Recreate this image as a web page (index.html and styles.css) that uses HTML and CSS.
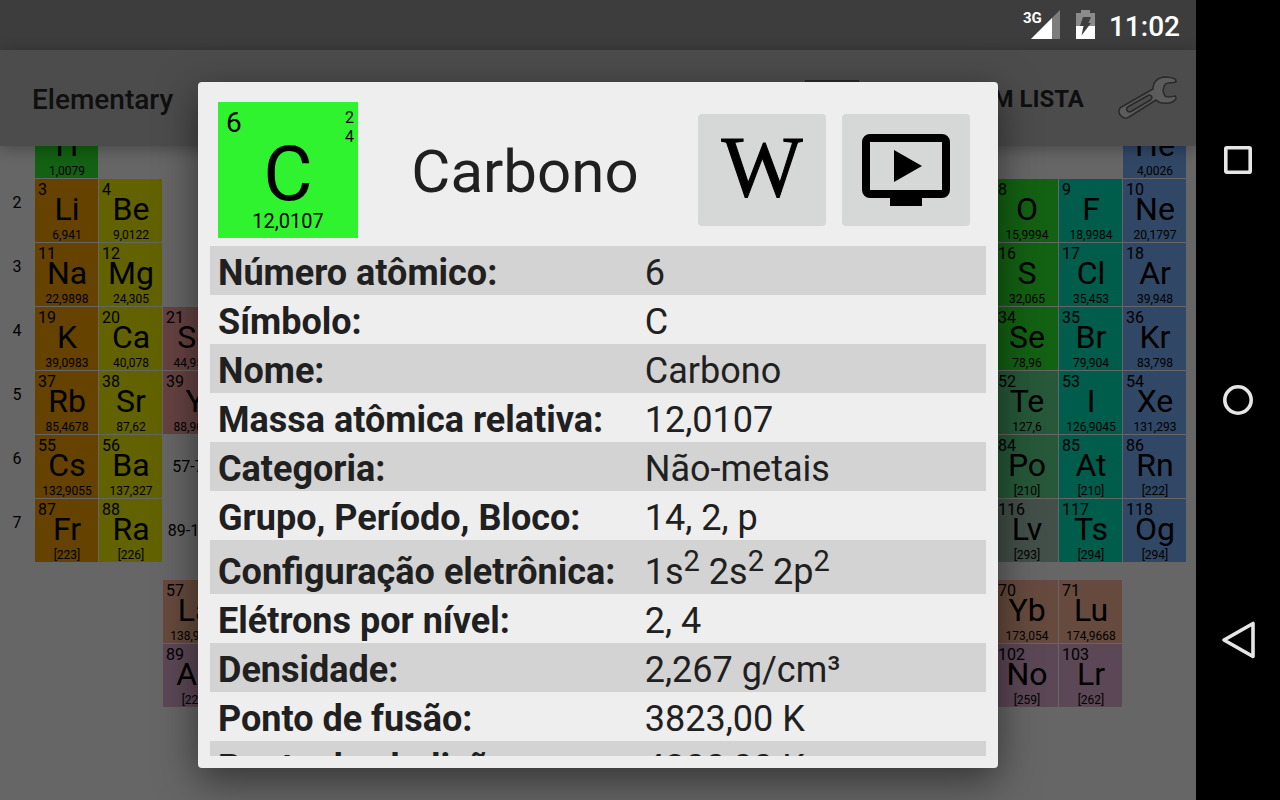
FILE: index.html
```html
<!DOCTYPE html>
<html lang="pt-BR">
<head>
<meta charset="utf-8">
<title>Elementary</title>
<link rel="stylesheet" href="styles.css">
</head>
<body>
<div class="screen">
  <div class="status">
    <span class="signal">
      <span class="net">3G</span>
      <svg width="29" height="29" viewBox="0 0 29 29" aria-hidden="true"><path d="M0 29 29 0V29z" fill="#7d7d7d"/><path d="M0 29 21 8V29z" fill="#fff"/></svg>
    </span>
    <svg width="19" height="29" viewBox="0 0 19 29" aria-hidden="true"><path d="M5 0h9v3h5v13H0V3h5z" fill="#8b8b8b"/><path d="M0 16h19v13H0z" fill="#fff"/><path d="M7 7h8l-2.500 6H15L5.500 25.500l2-9.500H4z" fill="#3d3d3d"/></svg>
    <time class="clock">11:02</time>
  </div>

  <header class="bar">
    <h1 class="title">Elementary</h1>
    <svg class="list-icon" width="54" height="36" viewBox="0 0 54 36" aria-hidden="true"><path d="M2 1h50v34H2z" fill="none" stroke="#292929" stroke-width="4"/></svg>
    <button class="list-button" type="button">EM LISTA</button>
    <button class="tool-button" type="button" aria-label="Configurações">
      <svg width="60" height="46" viewBox="0 0 60 46"><g fill="#5c5c5c" stroke="#292929" stroke-width="1.500" stroke-linejoin="round"><path d="M35 14C35 7 40 2.500 46 2c5 0 9 .5 11.500 2.500L58 7c-3 1.500-8-.5-10.500 2-3 3-3 8-.5 12 2 2 7 .5 10.500 0l.5 3c-3 3.500-8 5-13 4-3 0-5-1-7-3L11 42C5 46-2 38 2.500 32.500z"/><path d="M10.500 31.500 30 20.500c3-1.500 5.500 2 2.500 4.500L13 36.500c-4 1.500-6-3-2.500-5z" fill="#4c4c4c"/></g></svg>
    </button>
  </header>

  <main class="board">
    <div class="periodic">
      <div class="cell c1 nonmetal"><strong>H</strong><small>1,0079</small></div>
      <div class="cell c18 noble"><strong>He</strong><small>4,0026</small></div>

      <span class="period">2</span>
      <div class="cell c1 alkali"><b>3</b><strong>Li</strong><small>6,941</small></div>
      <div class="cell c2 earth"><b>4</b><strong>Be</strong><small>9,0122</small></div>
      <div class="cell c16 nonmetal"><b>8</b><strong>O</strong><small>15,9994</small></div>
      <div class="cell c17 halogen"><b>9</b><strong>F</strong><small>18,9984</small></div>
      <div class="cell c18 noble"><b>10</b><strong>Ne</strong><small>20,1797</small></div>

      <span class="period">3</span>
      <div class="cell c1 alkali"><b>11</b><strong>Na</strong><small>22,9898</small></div>
      <div class="cell c2 earth"><b>12</b><strong>Mg</strong><small>24,305</small></div>
      <div class="cell c16 nonmetal"><b>16</b><strong>S</strong><small>32,065</small></div>
      <div class="cell c17 halogen"><b>17</b><strong>Cl</strong><small>35,453</small></div>
      <div class="cell c18 noble"><b>18</b><strong>Ar</strong><small>39,948</small></div>

      <span class="period">4</span>
      <div class="cell c1 alkali"><b>19</b><strong>K</strong><small>39,0983</small></div>
      <div class="cell c2 earth"><b>20</b><strong>Ca</strong><small>40,078</small></div>
      <div class="cell c3 transition"><b>21</b><strong>Sc</strong><small>44,9559</small></div>
      <div class="cell c16 nonmetal"><b>34</b><strong>Se</strong><small>78,96</small></div>
      <div class="cell c17 halogen"><b>35</b><strong>Br</strong><small>79,904</small></div>
      <div class="cell c18 noble"><b>36</b><strong>Kr</strong><small>83,798</small></div>

      <span class="period">5</span>
      <div class="cell c1 alkali"><b>37</b><strong>Rb</strong><small>85,4678</small></div>
      <div class="cell c2 earth"><b>38</b><strong>Sr</strong><small>87,62</small></div>
      <div class="cell c3 transition"><b>39</b><strong>Y</strong><small>88,9059</small></div>
      <div class="cell c16 metalloid"><b>52</b><strong>Te</strong><small>127,6</small></div>
      <div class="cell c17 halogen"><b>53</b><strong>I</strong><small>126,9045</small></div>
      <div class="cell c18 noble"><b>54</b><strong>Xe</strong><small>131,293</small></div>

      <span class="period">6</span>
      <div class="cell c1 alkali"><b>55</b><strong>Cs</strong><small>132,9055</small></div>
      <div class="cell c2 earth"><b>56</b><strong>Ba</strong><small>137,327</small></div>
      <span class="range c3">57-71</span>
      <div class="cell c16 metalloid"><b>84</b><strong>Po</strong><small>[210]</small></div>
      <div class="cell c17 halogen"><b>85</b><strong>At</strong><small>[210]</small></div>
      <div class="cell c18 noble"><b>86</b><strong>Rn</strong><small>[222]</small></div>

      <span class="period">7</span>
      <div class="cell c1 alkali"><b>87</b><strong>Fr</strong><small>[223]</small></div>
      <div class="cell c2 earth"><b>88</b><strong>Ra</strong><small>[226]</small></div>
      <span class="range c3">89-103</span>
      <div class="cell c16 metal"><b>116</b><strong>Lv</strong><small>[293]</small></div>
      <div class="cell c17 halogen"><b>117</b><strong>Ts</strong><small>[294]</small></div>
      <div class="cell c18 noble"><b>118</b><strong>Og</strong><small>[294]</small></div>
    </div>

    <div class="periodic series">
      <div class="cell c3 lanthanide"><b>57</b><strong>La</strong><small>138,9055</small></div>
      <div class="cell c16 lanthanide"><b>70</b><strong>Yb</strong><small>173,054</small></div>
      <div class="cell c17 lanthanide"><b>71</b><strong>Lu</strong><small>174,9668</small></div>
      <div class="cell c3 actinide"><b>89</b><strong>Ac</strong><small>[227]</small></div>
      <div class="cell c16 actinide"><b>102</b><strong>No</strong><small>[259]</small></div>
      <div class="cell c17 actinide"><b>103</b><strong>Lr</strong><small>[262]</small></div>
    </div>
  </main>

  <div class="overlay">
    <section class="dialog" role="dialog" aria-labelledby="element-name">
      <div class="dialog-scroll">
        <div class="dialog-head">
          <div class="tile">
            <span class="tile-number">6</span>
            <span class="tile-shells">2<br>4</span>
            <span class="tile-symbol">C</span>
            <span class="tile-mass">12,0107</span>
          </div>
          <h2 class="name" id="element-name">Carbono</h2>
          <button class="action" type="button" aria-label="Wikipédia">
            <svg width="88" height="72" viewBox="0 0 88 72"><text class="wiki" x="44" y="62" text-anchor="middle">W</text></svg>
          </button>
          <button class="action" type="button" aria-label="Vídeo">
            <svg width="88" height="72" viewBox="0 0 88 72"><path fill-rule="evenodd" d="M8 0h72a8 8 0 0 1 8 8v48a8 8 0 0 1-8 8H60v8H28v-8H8a8 8 0 0 1-8-8V8a8 8 0 0 1 8-8zm0 8v48h72V8z"/><path d="M32 16v32l28-16z"/></svg>
          </button>
        </div>
        <table class="facts">
          <tr><th scope="row">Número atômico:</th><td>6</td></tr>
          <tr><th scope="row">Símbolo:</th><td>C</td></tr>
          <tr><th scope="row">Nome:</th><td>Carbono</td></tr>
          <tr><th scope="row">Massa atômica relativa:</th><td>12,0107</td></tr>
          <tr><th scope="row">Categoria:</th><td>Não-metais</td></tr>
          <tr><th scope="row">Grupo, Período, Bloco:</th><td>14, 2, p</td></tr>
          <tr class="tall"><th scope="row">Configuração eletrônica:</th><td>1s<sup>2</sup> 2s<sup>2</sup> 2p<sup>2</sup></td></tr>
          <tr><th scope="row">Elétrons por nível:</th><td>2, 4</td></tr>
          <tr><th scope="row">Densidade:</th><td>2,267 g/cm³</td></tr>
          <tr><th scope="row">Ponto de fusão:</th><td>3823,00 K</td></tr>
          <tr><th scope="row">Ponto de ebulição:</th><td>4300,00 K</td></tr>
        </table>
      </div>
    </section>
  </div>
</div>

<nav class="system-nav">
  <button type="button" aria-label="Recentes"><svg width="36" height="40" viewBox="0 0 36 40"><rect x="5.800" y="7.800" width="24.400" height="24.400" rx="1"/></svg></button>
  <button type="button" aria-label="Início"><svg width="36" height="40" viewBox="0 0 36 40"><circle cx="18" cy="20" r="13.200"/></svg></button>
  <button type="button" aria-label="Voltar"><svg width="36" height="40" viewBox="0 0 36 40"><path d="M4 20 33 3.500v33z"/></svg></button>
</nav>
</body>
</html>
```
FILE: styles.css
```css
* { box-sizing: border-box; }

body {
  margin: 0;
  height: 100vh;
  display: flex;
  overflow: hidden;
  background: #000;
  color: #000;
  font-family: Roboto, "Liberation Sans", sans-serif;
}

button {
  border: 0;
  padding: 0;
  background: none;
  color: inherit;
  font: inherit;
}

svg { display: block; }

/* App area */
.screen {
  position: relative;
  flex: 1;
  min-width: 0;
  display: flex;
  flex-direction: column;
  overflow: hidden;
  background: #666;
}

.status {
  height: 50px;
  padding-right: 16px;
  display: flex;
  align-items: center;
  justify-content: flex-end;
  gap: 16px;
  background: #3d3d3d;
  color: #fff;
}
.status svg { margin-bottom: 1px; }

.signal { display: flex; align-items: flex-start; }
.net {
  width: 8px;
  font-size: 15px;
  line-height: 16px;
  font-weight: 700;
}
.clock {
  padding-top: 3px;
  font-size: 28px;
  line-height: 32px;
  font-weight: 500;
}
.status > svg { margin-right: -2px; }

.bar {
  position: relative;
  height: 96px;
  padding: 0 18px 0 32px;
  display: flex;
  align-items: center;
  background: #4c4c4c;
  color: #0f0f0f;
  box-shadow: 0 3px 14px rgba(0, 0, 0, 0.3);
}

.title {
  flex: 1;
  margin: 0;
  padding-top: 3px;
  font-size: 28px;
  line-height: 32px;
  font-weight: 500;
}
.list-icon { margin-right: 120px; }
.list-button {
  padding-top: 2px;
  font-size: 24px;
  line-height: 28px;
  font-weight: 700;
}
.tool-button { margin-left: 34px; }

/* Periodic table, scrolled part of the way down */
.board {
  flex: 1;
  min-height: 0;
  overflow: hidden;
}

.periodic {
  margin-top: -31px;
  padding-right: 10px;
  display: grid;
  grid-template-columns: 34px repeat(18, 1fr);
  grid-auto-rows: 63px;
  gap: 1px;
}
.series { margin-top: 18px; }

.c1 { grid-column: 2; }
.c2 { grid-column: 3; }
.c3 { grid-column: 4; }
.c16 { grid-column: 17; }
.c17 { grid-column: 18; }
.c18 { grid-column: 19; }

.period {
  grid-column: 1;
  align-self: center;
  padding-bottom: 16px;
  text-align: center;
  font-size: 16px;
  line-height: 16px;
}
.range {
  align-self: center;
  padding-right: 4px;
  text-align: center;
  font-size: 16px;
  line-height: 16px;
}

.cell {
  padding-left: 1px;
  display: flex;
  flex-direction: column;
  align-items: center;
  justify-content: flex-end;
}
.cell b {
  align-self: flex-start;
  padding-left: 2px;
  font-size: 16px;
  line-height: 17px;
  font-weight: 400;
}
.cell strong {
  font-size: 32px;
  line-height: 22px;
  font-weight: 400;
}
.cell small {
  padding-top: 8px;
  font-size: 12px;
  line-height: 14px;
}

.nonmetal { background: #136113; }
.noble { background: #304766; }
.alkali { background: #664200; }
.earth { background: #626200; }
.halogen { background: #005c4b; }
.transition { background: #664242; }
.metalloid { background: #265839; }
.metal { background: #434f49; }
.lanthanide { background: #664a3d; }
.actinide { background: #5c4756; }

/* Element dialog */
.overlay {
  position: absolute;
  inset: 0;
  padding: 82px 198px 32px;
  display: flex;
}
.dialog {
  flex: 1;
  min-width: 0;
  padding: 12px;
  border-radius: 4px;
  background: #eee;
  color: #202020;
  box-shadow: 0 12px 40px rgba(0, 0, 0, 0.5);
}
.dialog-scroll {
  height: 100%;
  overflow: hidden;
}
.dialog-head {
  padding: 8px 16px 8px 8px;
  display: flex;
  align-items: center;
  gap: 16px;
}

.tile {
  width: 140px;
  height: 136px;
  display: grid;
  background: #30f330;
  color: #000;
}
.tile > span { grid-area: 1 / 1; }
.tile-number {
  padding: 4px 8px;
  font-size: 28px;
  line-height: 33px;
}
.tile-shells {
  justify-self: end;
  padding: 6px 4px;
  font-size: 16px;
  line-height: 19px;
}
.tile-symbol {
  place-self: center;
  padding-top: 8px;
  font-size: 76px;
  line-height: 88px;
}
.tile-mass {
  place-self: end center;
  padding-bottom: 5px;
  font-size: 20px;
  line-height: 24px;
}

.name {
  flex: 1;
  margin: 0;
  padding: 4px 6px 0 0;
  text-align: center;
  font-size: 60px;
  line-height: 70px;
  font-weight: 400;
}

.action {
  width: 128px;
  height: 112px;
  display: grid;
  place-items: center;
  border-radius: 4px;
  background: #d6d8d7;
  color: #000;
}
.wiki {
  font-family: "Liberation Serif", serif;
  font-size: 86px;
  stroke: #000;
  stroke-width: 1px;
}

.facts {
  width: 100%;
  border-collapse: collapse;
  font-size: 36px;
  line-height: 42px;
}
.facts tr { height: 49px; }
.facts .tall { height: 54px; }
.facts tr:nth-child(odd) { background: #d3d3d3; }
.facts th,
.facts td {
  padding: 6px 8px 1px;
  text-align: left;
  font-weight: 400;
  white-space: nowrap;
}
.facts th {
  width: 55%;
  font-weight: 700;
}
.facts .tall th,
.facts .tall td { padding-top: 11px; }
.facts sup {
  font-size: 29px;
  line-height: 0;
  vertical-align: 13px;
}

/* System navigation */
.system-nav {
  width: 84px;
  padding: 40px 0;
  display: flex;
  flex-direction: column;
}
.system-nav button {
  flex: 1;
  display: grid;
  place-items: center;
}
.system-nav svg {
  fill: none;
  stroke: #e6e6e6;
  stroke-width: 3.6;
  stroke-linejoin: round;
}
```
